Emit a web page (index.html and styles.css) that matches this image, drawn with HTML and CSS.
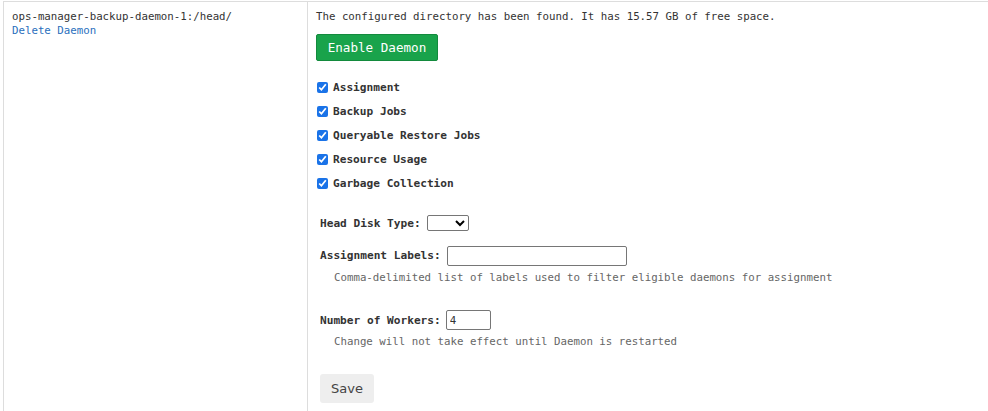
FILE: index.html
```html
<!DOCTYPE html>
<html>
<head>
<meta charset="utf-8">
<link rel="stylesheet" href="styles.css">
</head>
<body>
<div class="page">
<table class="daemons">
  <tr>
    <td class="name-cell">
      <div class="daemon-name">ops-manager-backup-daemon-1:/head/</div>
      <a class="link" href="#">Delete Daemon</a>
    </td>
    <td class="config-cell">
      <p class="status">The configured directory has been found. It has 15.57 GB of free space.</p>
      <button class="btn-enable">Enable Daemon</button>
      <ul class="checks">
        <li><input type="checkbox" checked><span>Assignment</span></li>
        <li><input type="checkbox" checked><span>Backup Jobs</span></li>
        <li><input type="checkbox" checked><span>Queryable Restore Jobs</span></li>
        <li><input type="checkbox" checked><span>Resource Usage</span></li>
        <li><input type="checkbox" checked><span>Garbage Collection</span></li>
      </ul>
      <div class="form">
        <div class="row row-disk"><label>Head Disk Type:</label><select class="sel"><option></option></select></div>
        <div class="row row-labels"><label>Assignment Labels:</label><input class="txt txt-wide" type="text"></div>
        <div class="help help-labels">Comma-delimited list of labels used to filter eligible daemons for assignment</div>
        <div class="row row-workers"><label>Number of Workers:</label><input class="txt txt-narrow" type="text" value="4"></div>
        <div class="help help-workers">Change will not take effect until Daemon is restarted</div>
        <button class="btn-save">Save</button>
      </div>
    </td>
  </tr>
</table>
</div>
</body>
</html>
```

FILE: styles.css
```css
html, body {
  margin: 0;
  padding: 0;
  background: #fff;
}
body {
  font-family: "DejaVu Sans Mono", "Liberation Mono", monospace;
  font-size: 10.75px;
  color: #333;
}
.page {
  padding: 1px 0 0 3px;
}
.daemons {
  border-collapse: collapse;
  width: 985px;
}
.daemons td {
  vertical-align: top;
  border-top: 1px solid #ddd;
  padding: 8px 8px 8px 8px;
}
.name-cell {
  width: 287px;
  border-left: 1px solid #ddd;
  border-right: 1px solid #ddd;
  height: 400px;
}
.daemon-name, .link {
  line-height: 14px;
  display: block;
}
.link {
  color: #2a6fbd;
  text-decoration: none;
}
.status {
  margin: 0;
  line-height: 14px;
}
.btn-enable {
  display: block;
  margin-top: 10px;
  width: 122px;
  height: 27px;
  background: #19a34b;
  border: 1px solid #138a3d;
  border-radius: 2px;
  color: #fff;
  font-family: "DejaVu Sans Mono", monospace;
  font-size: 12.6px;
  padding: 0;
}
.checks {
  list-style: none;
  margin: 14px 0 0 0;
  padding: 0;
}
.checks li {
  height: 24px;
  display: flex;
  align-items: center;
}
.checks input {
  width: 11px;
  height: 11px;
  margin: 1px 5px 0 1px;
  accent-color: #1a73e8;
}
.checks span, .row label {
  font-weight: bold;
  font-size: 11.15px;
  color: #333;
}
.form {
  margin-left: 4px;
}
.row {
  display: flex;
  align-items: center;
  gap: 6px;
  height: 22px;
}
.row-disk {
  margin-top: 17px;
}
.row-labels {
  margin-top: 11px;
  height: 21px;
}
.row-workers {
  margin-top: 24px;
  gap: 5px;
}
.sel {
  width: 42px;
  height: 16px;
  border: 1px solid #767676;
  border-radius: 2px;
  background: #fff;
  padding: 0;
  font-size: 10px;
}
.txt {
  height: 20px;
  box-sizing: border-box;
  border: 1px solid #767676;
  border-radius: 2px;
  font-family: "DejaVu Sans Mono", monospace;
  font-size: 10.75px;
  padding: 0 3px;
  color: #333;
}
.txt-wide {
  width: 180px;
}
.txt-narrow {
  width: 45px;
}
.help {
  margin-left: 14px;
  line-height: 14px;
  color: #666;
}
.help-labels {
  margin-top: 5px;
}
.help-workers {
  margin-top: 4px;
}
.btn-save {
  display: block;
  margin-top: 25px;
  width: 54px;
  height: 29px;
  background: #eee;
  border: none;
  border-radius: 3px;
  color: #444;
  font-family: "DejaVu Sans", sans-serif;
  font-size: 13px;
  padding: 0;
}
```
